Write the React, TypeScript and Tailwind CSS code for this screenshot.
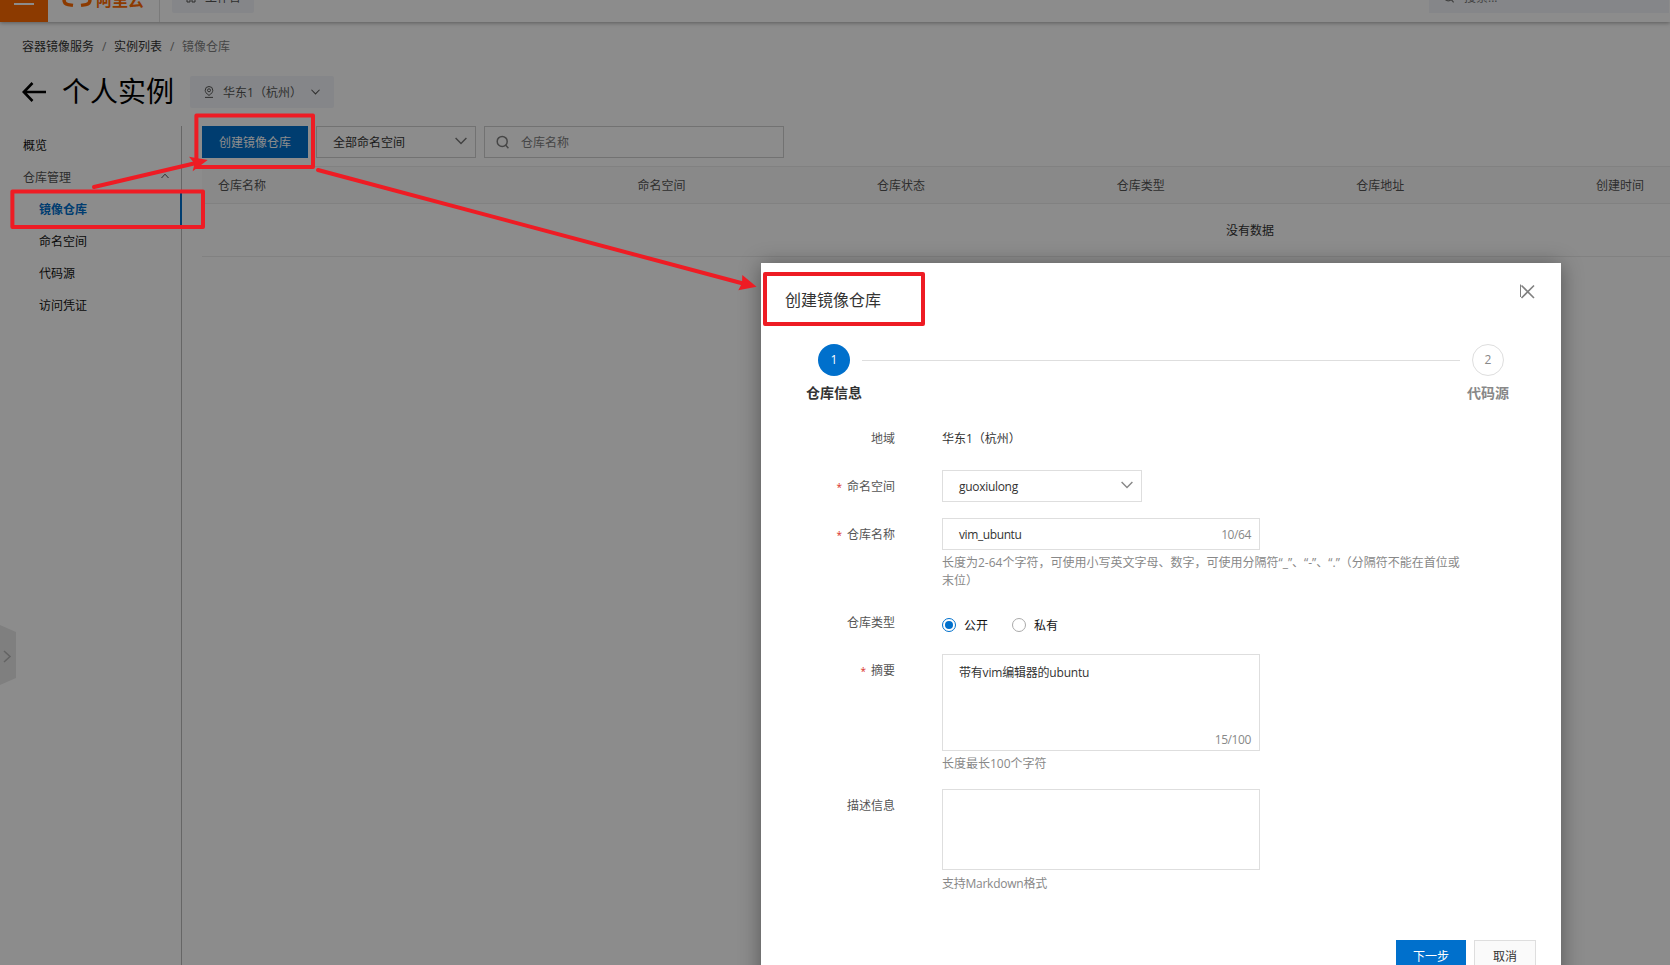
import { ReactNode } from "react";
import clsx from "clsx";

const breadcrumbs = ["容器镜像服务", "实例列表", "镜像仓库"];

const subMenu = ["镜像仓库", "命名空间", "代码源", "访问凭证"];

const columns = ["仓库名称", "命名空间", "仓库状态", "仓库类型", "仓库地址", "创建时间"];

function ChevronDown({ className }: { className?: string }) {
  return (
    <svg viewBox="0 0 12 8" className={className} fill="none" stroke="currentColor" strokeWidth="1.4" aria-hidden="true">
      <path d="M0.6 1L6 6.6L11.4 1" />
    </svg>
  );
}

function SearchIcon({ className }: { className?: string }) {
  return (
    <svg viewBox="0 0 14 14" className={className} fill="none" stroke="currentColor" strokeWidth="1.5" aria-hidden="true">
      <circle cx="6.2" cy="6.4" r="5" />
      <path d="M9.6 10L12.4 13.2" />
    </svg>
  );
}

function TopBar() {
  return (
    <header className="relative z-10 flex h-[22px] shrink-0 overflow-visible bg-white shadow-[0_1px_4px_rgba(0,0,0,0.35)]">
      <div className="flex h-[22px] w-12 shrink-0 justify-center bg-[#ff6a00] pt-[3px]">
        <div className="h-[2px] w-5 bg-white" />
      </div>
      <div className="flex h-[22px] w-28 items-start overflow-hidden border-r border-[#dedede] pl-[14px] text-[#ff6a00]">
        <svg viewBox="0 0 30 8" className="h-2 w-[30px]" fill="none" stroke="currentColor" strokeWidth="3.4" aria-hidden="true">
          <path d="M2 -2V0Q2 4 6 4.6L11 5.4" />
          <path d="M28 -2V0Q28 4 24 4.6L19 5.4" />
        </svg>
        <span className="-mt-2 ml-1 text-base leading-4 font-bold">阿里云</span>
      </div>
      <div className="ml-3 flex h-[13px] w-[82px] items-start overflow-hidden rounded-b-[2px] bg-[#f3f5f9] pl-[14px] text-[#555]">
        <svg viewBox="0 0 10 4" className="h-1 w-[10px]" fill="none" stroke="currentColor" strokeWidth="1" aria-hidden="true">
          <path d="M1 -3H4V2H1ZM6 -3H9V2H6Z" />
        </svg>
        <span className="-mt-2 ml-[9px] text-xs leading-3">工作台</span>
      </div>
      <div className="mr-px ml-auto flex h-[13px] w-[240px] items-start overflow-hidden bg-[#f3f5f9] pl-[14px] text-[#777]">
        <SearchIcon className="-mt-[9px] h-3 w-3" />
        <span className="-mt-2 ml-[9px] text-xs leading-3">搜索...</span>
      </div>
    </header>
  );
}

function SideNav() {
  return (
    <nav className="w-[182px] shrink-0 border-r border-[#bbb] pt-[3px] text-[#111]">
      <div className="flex h-8 items-center pt-0.5 pl-[23px]">概览</div>
      <div className="flex h-8 items-center justify-between pt-0.5 pr-3 pl-[23px] text-[#555]">
        仓库管理
        <svg viewBox="0 0 8 6" className="mb-1 h-[6px] w-2" fill="none" stroke="currentColor" aria-hidden="true">
          <path d="M0.5 5L4 1.2L7.5 5" />
        </svg>
      </div>
      {subMenu.map((item, index) => (
        <div
          key={item}
          className={clsx(
            "-mr-px flex h-8 items-center pt-0.5 pl-[39px]",
            index === 0 && "border-r-2 border-[#0070cc] font-bold text-[#0070cc]"
          )}
        >
          {item}
        </div>
      ))}
    </nav>
  );
}

function RepoList() {
  return (
    <main className="min-w-0 flex-1 overflow-hidden pl-5">
      <div className="flex gap-2">
        <button className="h-8 w-[106px] bg-[#0070cc] pt-0.5 text-white">创建镜像仓库</button>
        <div className="flex h-8 w-40 items-center justify-between border border-[#d0d0d0] pr-2 pl-4 text-[#333]">
          <span className="mt-0.5">全部命名空间</span>
          <ChevronDown className="mb-0.5 h-2 w-3 text-[#777]" />
        </div>
        <div className="flex h-8 w-[300px] items-center border border-[#d0d0d0] pl-[11px] text-[#808080]">
          <SearchIcon className="h-[14px] w-[14px]" />
          <span className="mt-0.5 ml-[11px]">仓库名称</span>
        </div>
      </div>

      <div className="mt-2 w-[2096px]">
        <div className="flex h-[38px] items-center border-y border-[#ebebeb] bg-[#fafafa] pt-[2px] text-[#555]">
          {columns.map((column, index) => (
            <div key={column} className={clsx("shrink-0 pl-4", index === 0 ? "w-[419.5px]" : "w-[239.6px]")}>
              {column}
            </div>
          ))}
        </div>
        <div className="flex h-[53px] items-center justify-center border-b border-[#ebebeb] pt-0.5 text-[#333]">
          没有数据
        </div>
      </div>
    </main>
  );
}

interface FieldProps {
  label: string;
  required?: boolean;
  className?: string;
  children: ReactNode;
}

function Field({ label, required, className, children }: FieldProps) {
  return (
    <div className={clsx("flex", className)}>
      <div className="w-[134px] shrink-0 text-right leading-[34px] -mb-0.5 text-[#555]">
        {required && <span className="mr-[5px] text-[10px] text-[#d93026]">*</span>}
        {label}
      </div>
      <div className="ml-[47px] w-[526px] text-[#333]">{children}</div>
    </div>
  );
}

function Steps() {
  return (
    <div className="mt-[30px] flex items-start">
      <div className="ml-7 flex w-[90px] flex-col items-center">
        <div className="flex h-8 w-8 items-center justify-center rounded-full bg-[#0070cc] text-white">1</div>
        <div className="mt-2 text-sm leading-[18px] font-bold text-[#333]">仓库信息</div>
      </div>
      <div className="-mx-[17px] mt-4 h-px flex-1 bg-[#dedede]" />
      <div className="mr-7 flex w-[90px] flex-col items-center text-[#888]">
        <div className="flex h-8 w-8 items-center justify-center rounded-full border border-[#dedede]">2</div>
        <div className="mt-2 text-sm leading-[18px] font-bold">代码源</div>
      </div>
    </div>
  );
}

function CreateRepoDialog() {
  return (
    <section
      role="dialog"
      className="absolute top-[263px] left-[761px] h-[740px] w-[800px] bg-white shadow-[0_2px_20px_rgba(0,0,0,0.4)]"
    >
      <div className="flex justify-between pt-[21px] pr-[26px] pl-6">
        <h2 className="mt-0.5 text-base leading-7 text-[#333]">创建镜像仓库</h2>
        <svg viewBox="0 0 15 15" className="h-[15px] w-[15px] text-[#808080]" fill="none" stroke="currentColor" aria-hidden="true">
          <path d="M1.5 1.5L14 14M14 1.5L1.5 14" strokeWidth="1.6" />
          <path d="M0.5 0.5V13" />
        </svg>
      </div>

      <Steps />

      <form className="mt-5">
        <Field label="地域">
          <div className="-mb-0.5 leading-[34px]">华东1（杭州）</div>
        </Field>
        <Field label="命名空间" required className="mt-4">
          <div className="flex h-8 w-[200px] items-center justify-between border border-[#dedede] pr-2 pl-4">
            <span className="mt-px tracking-[-0.3px]">guoxiulong</span>
            <ChevronDown className="mb-0.5 h-2 w-3 text-[#888]" />
          </div>
        </Field>
        <Field label="仓库名称" required className="mt-4">
          <div className="flex h-8 w-[318px] items-center justify-between border border-[#dedede] pr-2 pl-4">
            <span className="mt-px tracking-[-0.4px]">vim_ubuntu</span>
            <span className="mt-px tracking-[-0.4px] text-[#888]">10/64</span>
          </div>
          <p className="mt-1 leading-[18px] text-[#888]">
            长度为2-64个字符，可使用小写英文字母、数字，可使用分隔符“_”、“-”、“.”（分隔符不能在首位或末位）
          </p>
        </Field>
        <Field label="仓库类型" className="mt-4">
          <div className="flex h-8 items-center pt-[6px] text-[#111]">
            <span className="flex h-[14px] w-[14px] items-center justify-center rounded-full border border-[#0070cc]">
              <span className="h-2 w-2 rounded-full bg-[#0070cc]" />
            </span>
            <span className="mt-px ml-2">公开</span>
            <span className="ml-6 h-[14px] w-[14px] rounded-full border border-[#aaa]" />
            <span className="mt-px ml-2">私有</span>
          </div>
        </Field>
        <Field label="摘要" required className="mt-4">
          <div className="flex h-[97px] w-[318px] flex-col justify-between border border-[#dedede] pt-[9px] pr-2 pb-[1px] pl-4">
            <span className="leading-[18px] tracking-[-0.2px]">带有vim编辑器的ubuntu</span>
            <span className="self-end leading-[18px] tracking-[-0.4px] text-[#888]">15/100</span>
          </div>
          <p className="mt-1 leading-[18px] text-[#888]">长度最长100个字符</p>
        </Field>
        <Field label="描述信息" className="mt-4">
          <div className="h-[81px] w-[318px] border border-[#dedede]" />
          <p className="mt-[5px] leading-[18px] tracking-[-0.25px] text-[#888]">支持Markdown格式</p>
        </Field>
      </form>

      <div className="mt-[47px] flex justify-end gap-2 pr-[25px]">
        <button className="h-8 w-[70px] bg-[#0070cc] pt-0.5 text-white">下一步</button>
        <button className="h-8 w-[62px] border border-[#dedede] bg-[#fafafa] pt-0.5 text-[#333]">取消</button>
      </div>
    </section>
  );
}

// Red boxes and arrows leading from the menu entry to the dialog
function Annotations() {
  return (
    <svg viewBox="0 0 1670 965" className="absolute top-0 left-0 h-[965px] w-[1670px]" aria-hidden="true">
      <g fill="none" stroke="#ee1c24" strokeWidth="4" strokeLinejoin="round" strokeLinecap="round">
        <rect x="196.4" y="115.4" width="116.6" height="51.6" />
        <rect x="12.4" y="191.4" width="190.6" height="35.6" />
        <rect x="765" y="274" width="158" height="50" />
        <path d="M94 187L195 163.3" />
        <path d="M318 170L743 283.5" />
      </g>
      <g fill="#ee1c24">
        <path d="M207.7 160L189 156.7L194.5 163.4L192.7 171.3Z" />
        <path d="M756.6 286.8L742.3 275L742 283.3L738.3 290.3Z" />
      </g>
    </svg>
  );
}

export default function App() {
  return (
    <div className="relative flex h-[965px] w-[1670px] flex-col overflow-hidden bg-white font-['Open_Sans','Noto_Sans_CJK_SC',sans-serif] text-xs [text-spacing-trim:space-all]">
      <TopBar />

      <div className="flex h-[50px] shrink-0 items-center pl-[22px]">
        {breadcrumbs.map((crumb, index) => (
          <span key={crumb} className={index === 2 ? "text-[#808080]" : "text-[#333]"}>
            {index > 0 && <span className="mr-[9px] ml-2 inline-block w-[3px] text-[#808080]">/</span>}
            {crumb}
          </span>
        ))}
      </div>

      <div className="flex h-[54px] shrink-0 items-start pt-1 pl-[22px]">
        <svg viewBox="0 0 24 20" className="mt-[6px] h-5 w-6" fill="none" stroke="#000" strokeWidth="2.6" aria-hidden="true">
          <path d="M24 10H2M10.5 1L1.8 10L10.5 19" />
        </svg>
        <h1 className="-mt-px ml-4 text-[28px] leading-8 text-black">个人实例</h1>
        <div className="ml-4 flex h-8 w-36 items-center rounded-[2px] bg-[#f3f5f9] pl-[14px] text-[#555]">
          <svg viewBox="0 0 10 12" className="h-3 w-[10px]" fill="none" stroke="currentColor" aria-hidden="true">
            <circle cx="5" cy="4.3" r="1.5" />
            <path d="M5 9.4C2.4 7.6 1.2 6 1.2 4.3A3.8 3.8 0 0 1 8.8 4.3C8.8 6 7.6 7.6 5 9.4ZM1 11.4H9" />
          </svg>
          <span className="mt-0.5 ml-[9px]">华东1（杭州）</span>
          <ChevronDown className="mr-[14px] mb-px ml-auto h-[6px] w-[9px]" />
        </div>
      </div>

      <div className="flex flex-1">
        <SideNav />
        <RepoList />
      </div>

      <svg viewBox="0 0 16 60" className="absolute top-[625px] left-0 h-[60px] w-4" fill="none" aria-hidden="true">
        <path d="M0 0L16 7V53L0 60Z" fill="#e8e8e8" />
        <path d="M4 26L10 31.5L4 37" stroke="#b5b5b5" strokeWidth="1.6" />
      </svg>

      <div className="absolute inset-0 z-20 bg-black/45" />
      <div className="absolute inset-0 z-30">
        <CreateRepoDialog />
        <Annotations />
      </div>
    </div>
  );
}
